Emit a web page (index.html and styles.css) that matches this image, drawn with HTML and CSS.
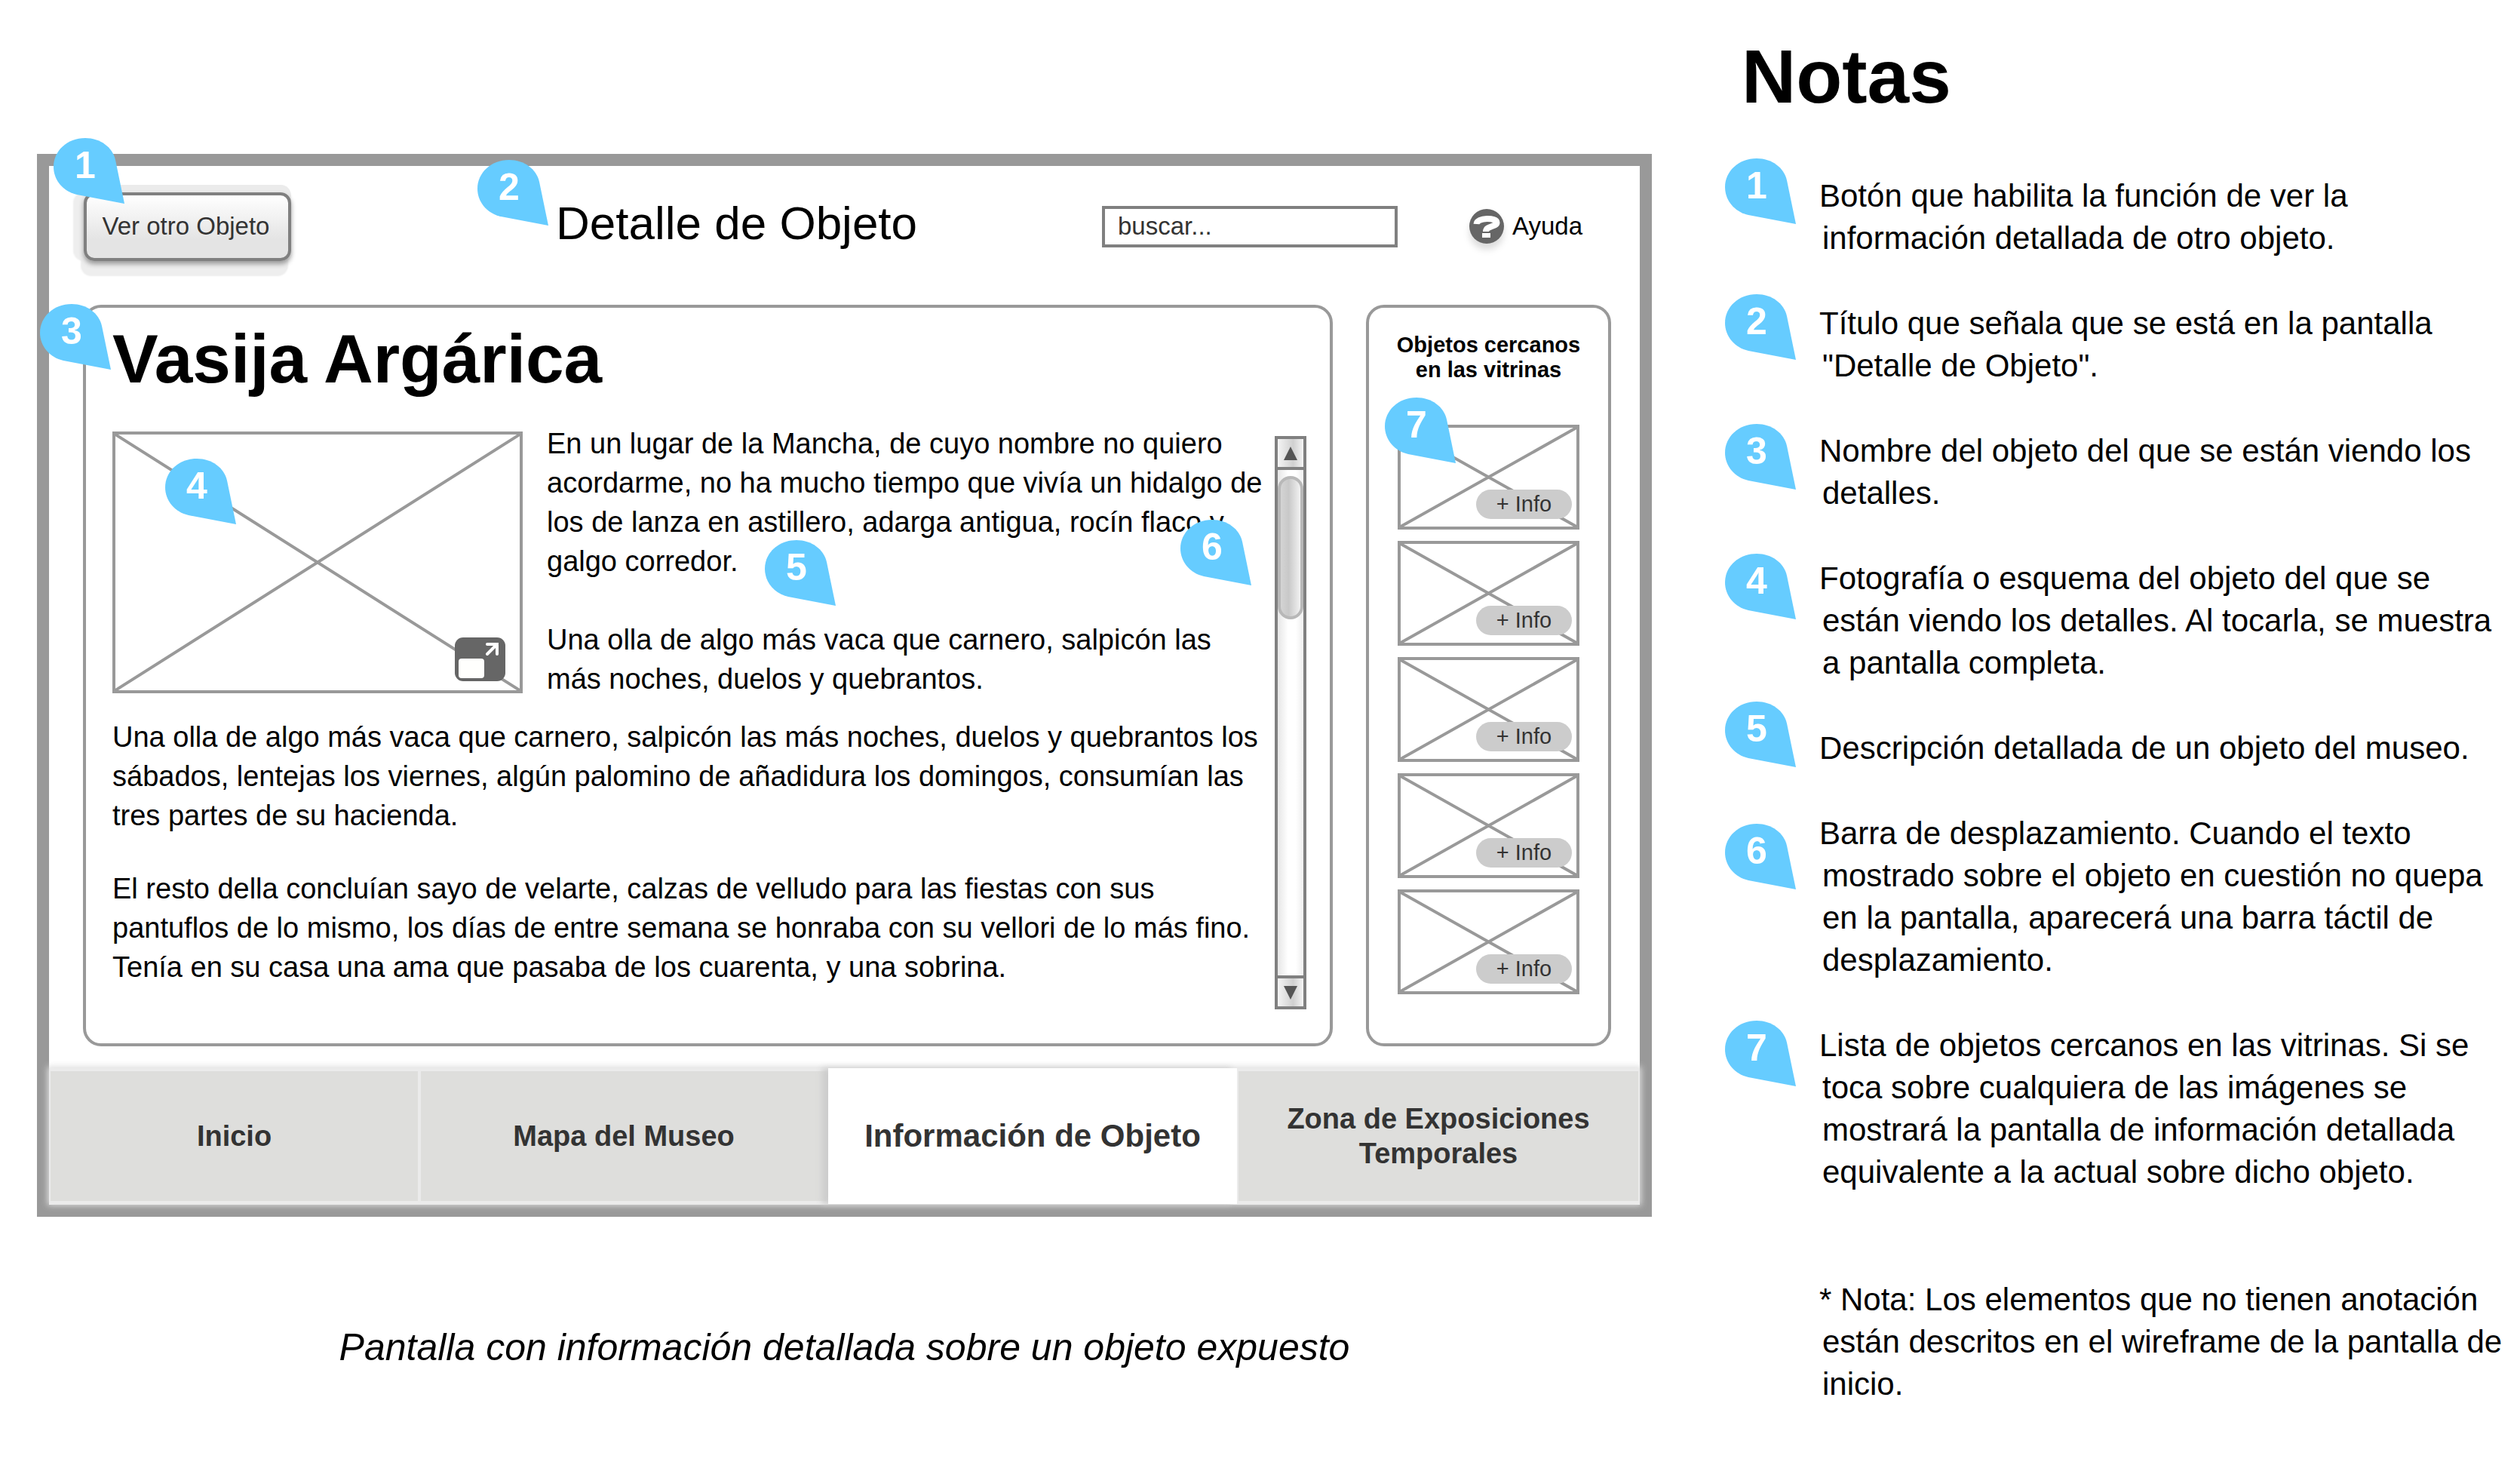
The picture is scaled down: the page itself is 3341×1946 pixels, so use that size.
FILE: index.html
```html
<!DOCTYPE html>
<html lang="es">
<head>
<meta charset="utf-8">
<title>Detalle de Objeto</title>
<link rel="stylesheet" href="styles.css">
</head>
<body>
<svg class="defs" width="0" height="0" aria-hidden="true">
  <symbol id="pin" viewBox="0 0 94 87"><path d="M94 87 82 29C78 12 62 0 42 0 18 0 0 17 0 38 0 56 13 71 31 75Z" fill="#66ccff"/></symbol>
</svg>
<div class="page">
  <main class="board">
    <section class="frame">
      <header class="topbar">
        <div class="back anchor">
          <button class="back-button" type="button">Ver otro Objeto</button>
          <span class="pin pin-back"><svg class="pin-shape"><use href="#pin"/></svg><b class="pin-number">1</b></span>
        </div>
        <h2 class="screen-title anchor">Detalle de Objeto<span class="pin pin-title"><svg class="pin-shape"><use href="#pin"/></svg><b class="pin-number">2</b></span></h2>
        <input class="search" type="text" value="buscar..." aria-label="Buscar">
        <a class="help" href="#ayuda">
          <svg class="help-icon" viewBox="0 0 46 46" aria-hidden="true"><circle cx="23" cy="23" r="23" fill="#666"/><path d="M9.500 20C10 11 36.500 11 36.500 18 36.500 24 22 22 22 30" fill="none" stroke="#fff" stroke-width="8"/><path d="M17 32h11v6H17z" fill="#fff"/></svg>
          Ayuda
        </a>
      </header>

      <div class="panels">
        <article class="panel detail anchor">
          <span class="pin pin-name"><svg class="pin-shape"><use href="#pin"/></svg><b class="pin-number">3</b></span>
          <h1 class="object-name">Vasija Argárica</h1>
          <div class="detail-body">
            <div class="description">
              <div class="intro">
                <div class="photo anchor">
                  <svg class="cross" preserveAspectRatio="none" viewBox="0 0 100 100" aria-hidden="true"><path d="M0 0 100 100M100 0 0 100"/></svg>
                  <button class="expand" type="button" aria-label="Ver a pantalla completa"><svg viewBox="0 0 67 58"><rect width="67" height="58" rx="11" fill="#666"/><rect x="5" y="28" width="34" height="26" rx="4" fill="#fffffd"/><path d="M43 9H56V22M56 9 43 22" fill="none" stroke="#fff" stroke-width="4" stroke-linecap="round"/></svg></button>
                  <span class="pin pin-photo"><svg class="pin-shape"><use href="#pin"/></svg><b class="pin-number">4</b></span>
                </div>
                <div class="intro-text anchor">
                  <p class="intro-paragraph">En un lugar de la Mancha, de cuyo nombre no quiero acordarme, no ha mucho tiempo que vivía un hidalgo de los de lanza en astillero, adarga antigua, rocín flaco y galgo corredor.</p>
                  <p class="intro-paragraph">Una olla de algo más vaca que carnero, salpicón las más noches, duelos y quebrantos.</p>
                  <span class="pin pin-text"><svg class="pin-shape"><use href="#pin"/></svg><b class="pin-number">5</b></span>
                  <span class="pin pin-scroll"><svg class="pin-shape"><use href="#pin"/></svg><b class="pin-number">6</b></span>
                </div>
              </div>
              <p class="paragraph">Una olla de algo más vaca que carnero, salpicón las más noches, duelos y quebrantos los sábados, lentejas los viernes, algún palomino de añadidura los domingos, consumían las tres partes de su hacienda.</p>
              <p class="paragraph">El resto della concluían sayo de velarte, calzas de velludo para las fiestas con sus pantuflos de lo mismo, los días de entre semana se honraba con su vellori de lo más fino. Tenía en su casa una ama que pasaba de los cuarenta, y una sobrina.</p>
            </div>
            <div class="scrollbar">
              <button class="scroll-button" type="button" aria-label="Subir"><svg viewBox="0 0 18 18"><path d="M9 0 18 18H0Z" fill="#555"/></svg></button>
              <div class="track"><div class="thumb"></div></div>
              <button class="scroll-button" type="button" aria-label="Bajar"><svg viewBox="0 0 18 18"><path d="M0 0H18L9 18Z" fill="#555"/></svg></button>
            </div>
          </div>
        </article>

        <aside class="panel nearby">
          <h3 class="nearby-title">Objetos cercanos<br>en las vitrinas</h3>
          <ul class="thumbs">
            <li class="item anchor"><svg class="cross" preserveAspectRatio="none" viewBox="0 0 100 100" aria-hidden="true"><path d="M0 0 100 100M100 0 0 100"/></svg><button class="info" type="button">+ Info</button><span class="pin pin-list"><svg class="pin-shape"><use href="#pin"/></svg><b class="pin-number">7</b></span></li>
            <li class="item anchor"><svg class="cross" preserveAspectRatio="none" viewBox="0 0 100 100" aria-hidden="true"><path d="M0 0 100 100M100 0 0 100"/></svg><button class="info" type="button">+ Info</button></li>
            <li class="item anchor"><svg class="cross" preserveAspectRatio="none" viewBox="0 0 100 100" aria-hidden="true"><path d="M0 0 100 100M100 0 0 100"/></svg><button class="info" type="button">+ Info</button></li>
            <li class="item anchor"><svg class="cross" preserveAspectRatio="none" viewBox="0 0 100 100" aria-hidden="true"><path d="M0 0 100 100M100 0 0 100"/></svg><button class="info" type="button">+ Info</button></li>
            <li class="item anchor"><svg class="cross" preserveAspectRatio="none" viewBox="0 0 100 100" aria-hidden="true"><path d="M0 0 100 100M100 0 0 100"/></svg><button class="info" type="button">+ Info</button></li>
          </ul>
        </aside>
      </div>

      <nav class="tabs">
        <a class="tab" href="#inicio">Inicio</a>
        <a class="tab" href="#mapa">Mapa del Museo</a>
        <a class="tab active" href="#objeto" aria-current="page">Información de Objeto</a>
        <a class="tab" href="#zona">Zona de Exposiciones Temporales</a>
      </nav>
    </section>
    <p class="caption">Pantalla con información detallada sobre un objeto expuesto</p>
  </main>

  <aside class="notes">
    <h2 class="notes-title">Notas</h2>
    <ol class="note-list">
      <li class="note">Botón que habilita la función de ver la información detallada de otro objeto.</li>
      <li class="note">Título que señala que se está en la pantalla "Detalle de Objeto".</li>
      <li class="note">Nombre del objeto del que se están viendo los detalles.</li>
      <li class="note">Fotografía o esquema del objeto del que se están viendo los detalles. Al tocarla, se muestra a pantalla completa.</li>
      <li class="note">Descripción detallada de un objeto del museo.</li>
      <li class="note">Barra de desplazamiento. Cuando el texto mostrado sobre el objeto en cuestión no quepa en la pantalla, aparecerá una barra táctil de desplazamiento.</li>
      <li class="note">Lista de objetos cercanos en las vitrinas. Si se toca sobre cualquiera de las imágenes se mostrará la pantalla de información detallada equivalente a la actual sobre dicho objeto.</li>
    </ol>
    <p class="footnote">* Nota: Los elementos que no tienen anotación están descritos en el wireframe de la pantalla de inicio.</p>
    <span class="pin note-pin-1"><svg class="pin-shape"><use href="#pin"/></svg><b class="pin-number">1</b></span>
    <span class="pin note-pin-2"><svg class="pin-shape"><use href="#pin"/></svg><b class="pin-number">2</b></span>
    <span class="pin note-pin-3"><svg class="pin-shape"><use href="#pin"/></svg><b class="pin-number">3</b></span>
    <span class="pin note-pin-4"><svg class="pin-shape"><use href="#pin"/></svg><b class="pin-number">4</b></span>
    <span class="pin note-pin-5"><svg class="pin-shape"><use href="#pin"/></svg><b class="pin-number">5</b></span>
    <span class="pin note-pin-6"><svg class="pin-shape"><use href="#pin"/></svg><b class="pin-number">6</b></span>
    <span class="pin note-pin-7"><svg class="pin-shape"><use href="#pin"/></svg><b class="pin-number">7</b></span>
  </aside>
</div>
</body>
</html>
```
FILE: styles.css
```css
* { box-sizing: border-box; }
body, h1, h2, h3, p, ul, ol { margin: 0; padding: 0; }
ul, ol { list-style: none; }
body {
  background: #fff;
  color: #000;
  font-family: "Liberation Sans", Arial, sans-serif;
  font-size: 33px;
}
button, input { font: inherit; }
a { color: inherit; text-decoration: none; }
.defs { position: absolute; }
.anchor { position: relative; }

.page {
  display: grid;
  grid-template-columns: minmax(0, 2141fr) minmax(0, 1034fr);
  column-gap: 97px;
  padding: 0 20px 0 49px;
}

/* Numbered markers */
.pin {
  position: absolute;
  z-index: 2;
  width: 94px;
  height: 87px;
}
.pin-shape { display: block; width: 94px; height: 87px; }
.pin-number {
  position: absolute;
  top: 8px;
  left: 0;
  width: 84px;
  color: #fff;
  font-size: 50px;
  line-height: 56px;
  text-align: center;
}
.pin-back { left: -40px; top: -72px; }
.pin-title { left: -104px; top: -48px; }
.pin-name { left: -61px; top: -5px; }
.pin-photo { left: 66px; top: 32px; }
.pin-text { left: 289px; top: 154px; }
.pin-scroll { right: 15px; top: 127px; }
.pin-list { left: -21px; top: -40px; }

/* Wireframe */
.frame {
  margin-top: 204px;
  border: 16px solid #999;
}
.topbar {
  display: flex;
  align-items: center;
  height: 184px;
  padding: 0 76px 24px 46px;
}
.back-button {
  width: 275px;
  height: 91px;
  padding: 0 4px 0 0;
  border: 4px solid #808080;
  border-radius: 14px;
  background: linear-gradient(#fff, #e4e4e4 70%);
  color: #333;
  box-shadow: 0 4px 6px #999, -14px 0 2px #eee, 0 -10px 0 #ebebeb, -4px 20px 2px #eee;
}
.screen-title {
  margin-left: 351px;
  padding-bottom: 8px;
  font-size: 62px;
  font-weight: 400;
  line-height: 72px;
}
.search {
  width: 392px;
  height: 55px;
  margin-left: auto;
  padding: 0 17px;
  border: 4px solid #808080;
  border-radius: 0;
  background: #fff;
  color: #333;
}
.help {
  display: flex;
  align-items: center;
  gap: 11px;
  margin-left: 95px;
}
.help-icon { width: 46px; height: 46px; filter: drop-shadow(0 8px 4px #ddd); }

.panels {
  display: grid;
  grid-template-columns: minmax(0, 1657fr) minmax(0, 325fr);
  column-gap: 44px;
  padding: 0 38px 0 45px;
}
.panel {
  border: 4px solid #999;
  border-radius: 24px;
}
.detail { padding: 16px 31px 45px 35px; }
.object-name {
  font-size: 91px;
  line-height: 104px;
  margin-bottom: 44px;
}
.detail-body { display: flex; gap: 16px; }
.description {
  flex: 1;
  min-width: 0;
  font-size: 38px;
  line-height: 52px;
}
.intro {
  display: flex;
  align-items: flex-start;
  gap: 32px;
  margin-bottom: 32px;
}
.photo {
  flex: none;
  width: 544px;
  height: 347px;
  border: 4px solid #999;
}
.cross {
  display: block;
  width: 100%;
  height: 100%;
}
.cross path {
  stroke: #999;
  stroke-width: 4px;
  vector-effect: non-scaling-stroke;
}
.expand {
  position: absolute;
  right: 19px;
  bottom: 12px;
  width: 67px;
  height: 58px;
  padding: 0;
  border: 0;
  background: none;
}
.expand svg { display: block; }
.intro-text { flex: 1; min-width: 0; margin: -10px 0 -18px; }
.intro-paragraph + .intro-paragraph { margin-top: 52px; }
.paragraph { position: static; }
.paragraph + .paragraph { margin-top: 45px; }

.scrollbar {
  display: flex;
  flex-direction: column;
  flex: none;
  width: 42px;
  height: 760px;
  margin-top: 6px;
  border: 4px solid #808080;
}
.scroll-button {
  flex: none;
  height: 37px;
  padding: 0 8px;
  border: 0;
  background: linear-gradient(90deg, #f4f4f4, #d0d0d0 60%, #f4f4f4);
}
.scroll-button svg { display: block; width: 18px; height: 18px; }
.track {
  flex: 1;
  padding-top: 8px;
  border: solid #808080;
  border-width: 4px 0;
  background: linear-gradient(90deg, #e6e6e6, #fff 40%, #fff 70%, #eee);
}
.thumb {
  height: 190px;
  border: 4px solid #b8b8b8;
  border-radius: 17px;
  background: linear-gradient(90deg, #d4d4d4, #c8c8c8 40%, #f2f2f2);
}

.nearby { padding: 33px 38px; }
.nearby-title {
  margin: 0 -10px 56px;
  font-size: 29px;
  line-height: 33px;
  text-align: center;
}
.thumbs { display: grid; gap: 15px; }
.item { height: 139px; border: 4px solid #999; }
.info {
  position: absolute;
  right: 6px;
  bottom: 10px;
  width: 127px;
  height: 39px;
  padding: 0;
  border: 0;
  border-radius: 20px;
  background: #ccc;
  color: #333;
  font-size: 29px;
}

.tabs {
  display: grid;
  grid-template-columns: 491fr 542fr 542fr 534fr;
  height: 180px;
  margin-top: 29px;
  margin-bottom: 1px;
  box-shadow: 0 0 8px 2px #ddd;
}
.tab {
  display: flex;
  align-items: center;
  justify-content: center;
  padding: 0 40px;
  border: solid #ebebeb;
  border-width: 4px 2px;
  background: #dededc;
  color: #333;
  font-size: 38px;
  font-weight: 700;
  line-height: 46px;
  text-align: center;
}
.tab.active {
  padding: 0;
  border-color: #fff;
  background: #fff;
  font-size: 42px;
  box-shadow: -8px 0 8px #ccc;
}
.caption {
  margin-top: 143px;
  font-size: 50px;
  font-style: italic;
  line-height: 60px;
  text-align: center;
}

/* Notes */
.notes { position: relative; padding-left: 125px; }
.notes-title {
  margin: 44px 0 74px -103px;
  font-size: 100px;
  line-height: 114px;
}
.note, .footnote {
  padding-left: 4px;
  font-size: 42px;
  line-height: 56px;
  text-indent: -4px;
}
.note + .note { margin-top: 57px; }
.footnote { margin-top: 113px; }
.note-pin-1 { left: 0; top: 210px; }
.note-pin-2 { left: 0; top: 390px; }
.note-pin-3 { left: 0; top: 562px; }
.note-pin-4 { left: 0; top: 734px; }
.note-pin-5 { left: 0; top: 930px; }
.note-pin-6 { left: 0; top: 1092px; }
.note-pin-7 { left: 0; top: 1353px; }
```
